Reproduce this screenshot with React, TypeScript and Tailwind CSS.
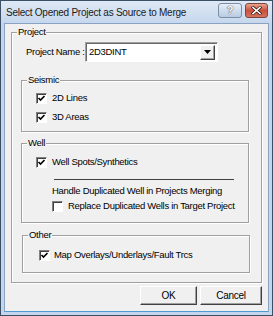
import React from "react";

const font = { fontFamily: '"Liberation Sans", Arial, sans-serif' };

const Check = ({ checked }: { checked: boolean }) => (
  <span className="w-[11px] h-[11px] shrink-0 bg-white border border-t-[#808080] border-l-[#808080] border-b-white border-r-white shadow-[inset_1px_1px_0_#404040] flex items-center justify-center">
    {checked && (
      <svg width="9" height="9" viewBox="0 0 9 9">
        <path d="M1.5 4 L3.5 6 L7.5 2" fill="none" stroke="#000" strokeWidth="1.6" />
      </svg>
    )}
  </span>
);

const Group = ({
  label,
  className,
  children,
}: {
  label: string;
  className: string;
  children?: React.ReactNode;
}) => (
  <div className={`relative border border-[#a0a0a0] shadow-[inset_1px_1px_0_#fff,1px_1px_0_#fff] ${className}`}>
    <span className="absolute -top-[7px] left-[5px] px-[1px] bg-[#f0f0f0] leading-[12px]">{label}</span>
    {children}
  </div>
);

const Btn = ({ label, className }: { label: string; className: string }) => (
  <button className={`h-[19px] bg-[#f0f0f0] border border-t-white border-l-white border-r-[#404040] border-b-[#404040] shadow-[inset_-1px_-1px_0_#a0a0a0] text-[10px] text-black ${className}`}>
    {label}
  </button>
);

export default function App() {
  return (
    <div className="w-[273px] h-[316px] flex flex-col border border-[#3b4f66] bg-[#c4d6ec] text-[9.5px] tracking-[-0.3px] text-black whitespace-nowrap" style={font}>
      {/* title bar */}
      <div className="h-[22px] flex items-center pl-[5px] pr-[4px] bg-gradient-to-b from-[#dfe9f5] to-[#c6d7ed]">
        <span className="text-[10px] tracking-[-0.25px] text-[#1a1a1a] flex-1">Select Opened Project as Source to Merge</span>
        <div className="flex gap-[3px] mt-[-3px]">
          <div className="w-[24px] h-[15px] rounded-[3px] border border-[#7a8ea6] bg-gradient-to-b from-[#e6eef8] to-[#b9cbe2] flex items-center justify-center text-[11px] font-bold text-white [text-shadow:0_0_1px_#34495f,0_0_1px_#34495f]">
            ?
          </div>
          <div className="w-[23px] h-[15px] rounded-[3px] border border-[#83453a] bg-gradient-to-b from-[#e8a38f] via-[#c9503c] to-[#d4725e] flex items-center justify-center">
            <svg width="11" height="9" viewBox="0 0 11 9">
              <path d="M2 1.5 L9 7.5 M9 1.5 L2 7.5" stroke="#3a1a14" strokeWidth="3" strokeLinecap="square" />
              <path d="M2 1.5 L9 7.5 M9 1.5 L2 7.5" stroke="#fff" strokeWidth="1.6" strokeLinecap="square" />
            </svg>
          </div>
        </div>
      </div>

      {/* client area */}
      <div className="flex-1 mx-[3px] mb-[3px] border border-[#8aa3c2] border-b-[#4f9bd0] bg-[#f0f0f0] flex flex-col pl-[6px] pt-[8px] pr-[5px]">
        <Group label="Project" className="w-[251px] h-[251px] flex flex-col">
          <div className="flex items-center mt-[9px] pl-[14px]">
            <span className="w-[59px]">Project Name :</span>
            <div className="w-[133px] h-[20px] bg-white border border-t-[#a0a0a0] border-l-[#a0a0a0] border-b-white border-r-white shadow-[inset_1px_1px_0_#696969] flex items-center pl-[3px] pr-[2px]">
              <span className="flex-1">2D3DINT</span>
              <div className="w-[15px] h-[15px] bg-[#f0f0f0] border border-t-white border-l-white border-r-[#404040] border-b-[#404040] shadow-[inset_-1px_-1px_0_#a0a0a0] flex items-center justify-center">
                <svg width="7" height="4" viewBox="0 0 7 4">
                  <path d="M0 0 H7 L3.5 4 Z" fill="#000" />
                </svg>
              </div>
            </div>
          </div>

          <Group label="Seismic" className="ml-[9px] mt-[18px] w-[228px] h-[52px] flex flex-col gap-[8px] pt-[12px] pl-[14px]">
            <label className="flex items-center gap-[5px] h-[11px]">
              <Check checked />
              <span>2D Lines</span>
            </label>
            <label className="flex items-center gap-[5px] h-[11px]">
              <Check checked />
              <span>3D Areas</span>
            </label>
          </Group>

          <Group label="Well" className="ml-[9px] mt-[11px] w-[228px] h-[80px] flex flex-col pt-[13px] pl-[14px]">
            <label className="flex items-center gap-[5px] h-[11px]">
              <Check checked />
              <span>Well Spots/Synthetics</span>
            </label>
            <div className="ml-[18px] mt-[11px] w-[180px] h-0 border-t border-[#404040]" />
            <span className="ml-[16px] mt-[5px] leading-[11px]">Handle Duplicated Well in Projects Merging</span>
            <label className="flex items-center gap-[5px] h-[11px] ml-[16px] mt-[5px]">
              <Check checked={false} />
              <span>Replace Duplicated Wells in Target Project</span>
            </label>
          </Group>

          <Group label="Other" className="ml-[10px] mt-[12px] w-[228px] h-[38px] flex flex-col pt-[14px] pl-[16px]">
            <label className="flex items-center gap-[4px] h-[11px]">
              <Check checked />
              <span>Map Overlays/Underlays/Fault Trcs</span>
            </label>
          </Group>
        </Group>

        <div className="flex justify-end gap-[3px] mt-[3px] pr-[1px]">
          <Btn label="OK" className="w-[57px]" />
          <Btn label="Cancel" className="w-[62px]" />
        </div>
      </div>
    </div>
  );
}
